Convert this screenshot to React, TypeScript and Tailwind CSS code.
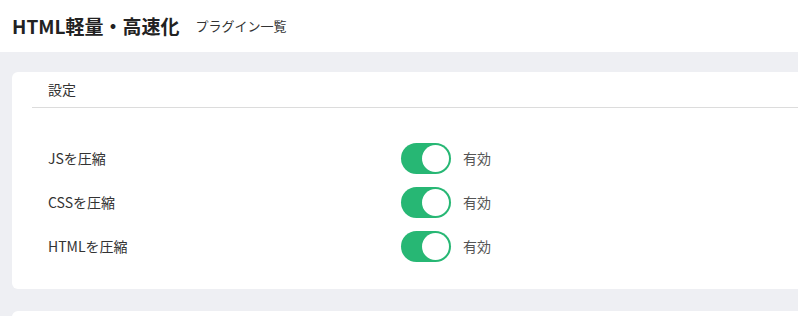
const font = { fontFamily: '"Noto Sans CJK JP", "Noto Sans", sans-serif' };

const rows = ['JSを圧縮', 'CSSを圧縮', 'HTMLを圧縮'];

function Toggle() {
    return (
        <div className="relative h-[31px] w-[50px] rounded-full bg-[#27b774]">
            <div className="absolute right-[2px] top-[2px] h-[27px] w-[27px] rounded-full bg-white" />
        </div>
    );
}

export default function App() {
    return (
        <div className="h-[316px] w-[798px] overflow-hidden bg-[#eeeff3] text-[#333]" style={font}>
            {/* page header */}
            <div className="flex h-[52px] items-center gap-4 bg-white px-3">
                <h1 className="text-[19px] font-bold text-[#222]">HTML軽量・高速化</h1>
                <span className="text-[13px] text-[#333]">プラグイン一覧</span>
            </div>

            <div className="pl-3 pt-5">
                <div className="w-[820px] rounded-md bg-white pb-[21px]">
                    <div className="px-5">
                        <div className="flex h-9 items-center border-b border-[#dcdcdc] pl-4 text-[14px]">設定</div>
                    </div>
                    <div className="pt-7">
                        {rows.map((label) => (
                            <div key={label} className="flex h-11 items-center pl-9">
                                <div className="w-[353px] text-[14px] text-[#333]">{label}</div>
                                <Toggle />
                                <span className="ml-3 text-[14px] text-[#555]">有効</span>
                            </div>
                        ))}
                    </div>
                </div>
                <div className="mt-[22px] h-10 w-[820px] rounded-md bg-white" />
            </div>
        </div>
    );
}
